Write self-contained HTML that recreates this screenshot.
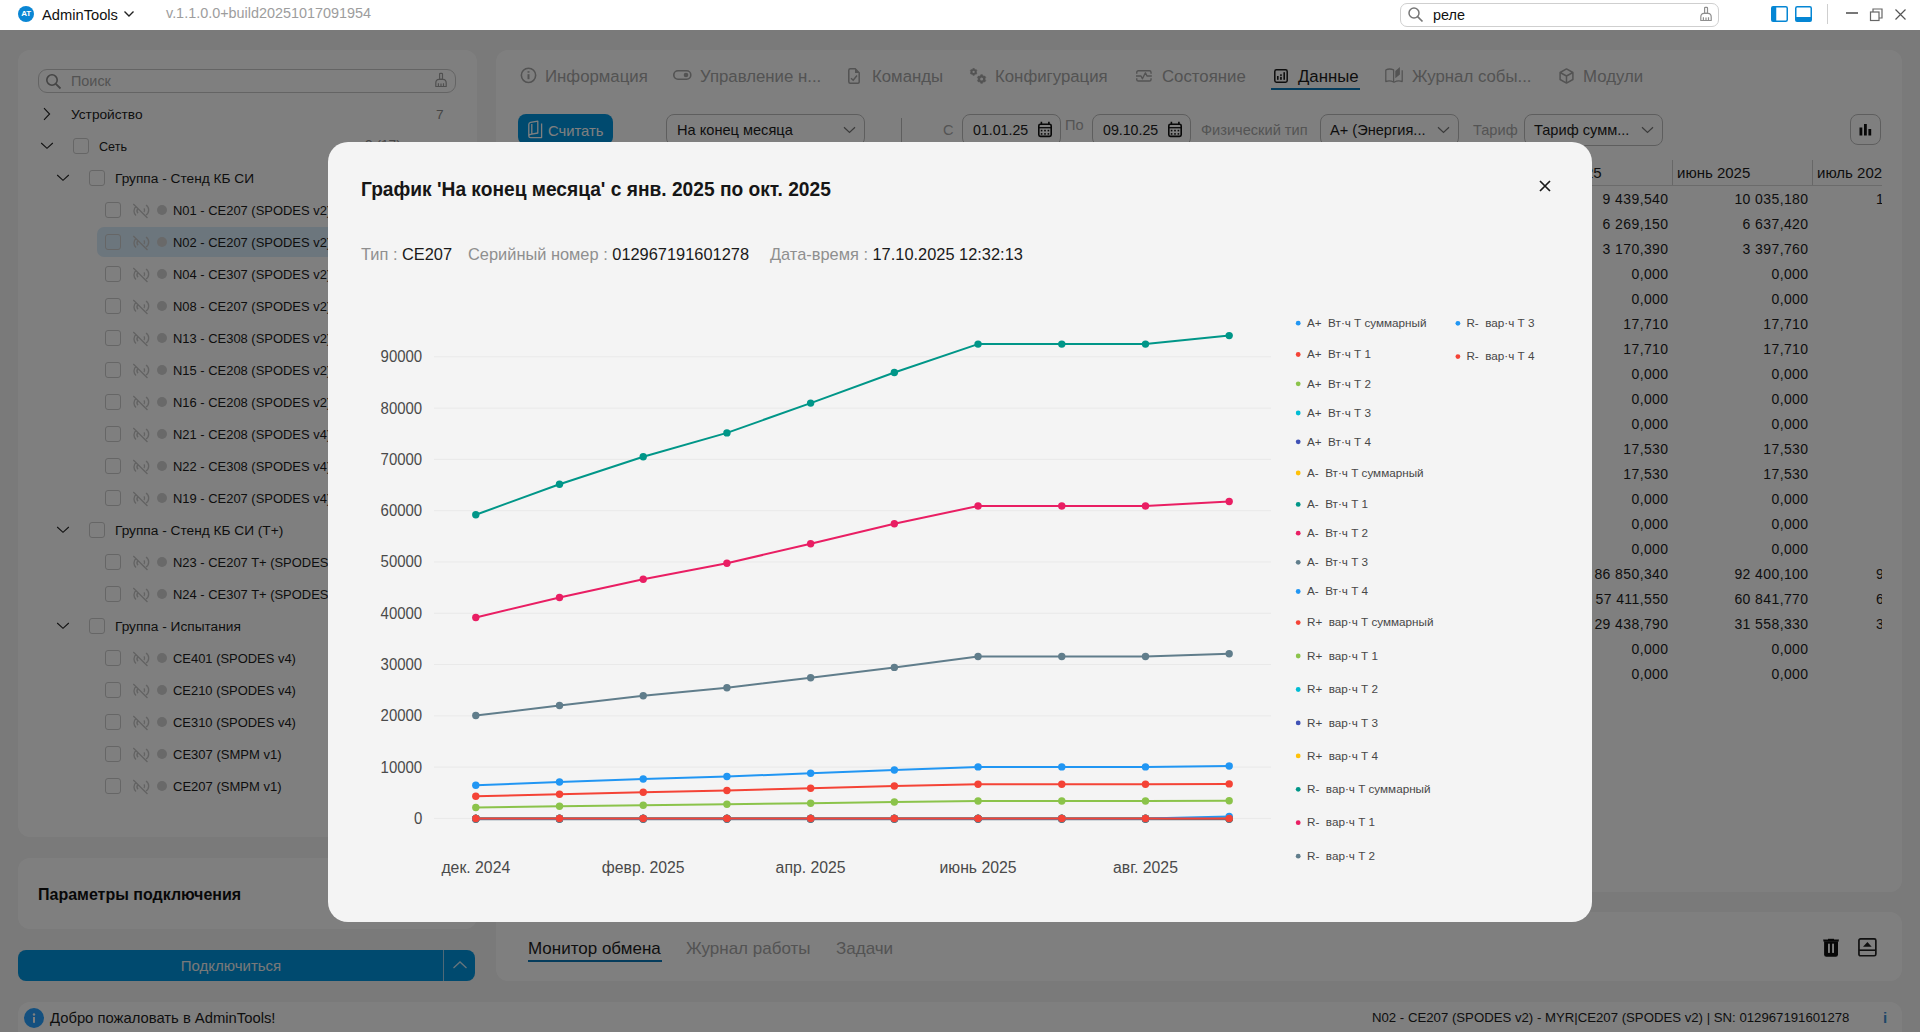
<!DOCTYPE html>
<html><head><meta charset="utf-8">
<style>
*{box-sizing:border-box;margin:0;padding:0}
html,body{width:1920px;height:1032px;overflow:hidden;background:#f4f4f4;font-family:"Liberation Sans",sans-serif;color:#1b1b1b}
.a{position:absolute;white-space:nowrap}
svg{position:absolute;overflow:visible}
#app{position:absolute;left:0;top:0;width:1920px;height:1032px}
.card{position:absolute;background:#fff;border-radius:12px}
#title{position:absolute;left:0;top:0;width:1920px;height:30px;background:#fff;z-index:5}
#ov{position:absolute;left:0;top:30px;width:1920px;height:1002px;background:rgba(0,0,0,.5);z-index:3}
#modal{position:absolute;left:328px;top:142px;width:1264px;height:779.5px;background:#f4f4f4;border-radius:20px;z-index:4;overflow:hidden}
.row{position:absolute;height:32px;line-height:32px;font-size:13.7px;color:#1c1c1c}
.cb{position:absolute;width:16px;height:16px;border:1.3px solid #cccccc;border-radius:3px}
.tab{position:absolute;top:61px;height:32px;line-height:32px;font-size:16.8px;color:#a4a4a4}
.dd{position:absolute;top:114px;height:32px;border:1px solid #bdbdbd;border-radius:8px;font-size:14.6px;line-height:29px;color:#1c1c1c}
.lbl{position:absolute;top:115px;height:31px;line-height:31px;font-size:14.6px;color:#a8a8a8}
.tr{position:absolute;height:25px;line-height:25px;font-size:14px;color:#1c1c1c;text-align:right;letter-spacing:0.4px}
</style></head><body>
<div id="app">
  <div class="card" style="left:18px;top:50px;width:459px;height:787px"></div>
  <div class="card" style="left:18px;top:858px;width:459px;height:71px"></div>
  <div class="a" style="left:18px;top:950px;width:457px;height:31px;background:#0094de;border-radius:8px"></div>
  <div class="card" style="left:18px;top:1002px;width:1884px;height:40px"></div>
  <div class="card" style="left:496px;top:50px;width:1406px;height:842px"></div>
  <div class="card" style="left:496px;top:912px;width:1406px;height:69px"></div>
<div class="a" style="left:38px;top:69px;width:418px;height:24px;border:1px solid #c8c8c8;border-radius:9px"></div>
<svg style="left:45px;top:73px" width="18" height="18" viewBox="0 0 18 18"><circle cx="7" cy="7" r="5.2" fill="none" stroke="#8a8a8a" stroke-width="1.6"/><path d="M10.8 10.8 L15.5 15.5" stroke="#8a8a8a" stroke-width="1.8"/></svg>
<div class="a" style="left:71px;top:69px;height:24px;line-height:24px;font-size:14.4px;color:#a6a6a6">Поиск</div>
<svg style="left:434.1px;top:72.1px" width="14" height="16" viewBox="0 0 14 16"><rect x="5.6" y="1.3" width="2.9" height="6" rx="0.8" fill="none" stroke="#a0a0a0" stroke-width="1.2"/><path d="M1.8 14.5 V11 Q1.8 7.6 5 7.4 H9 Q12.2 7.6 12.2 11 V14.5 Z M4.4 11.3 V14.5 M7 11.6 V14.5 M9.5 11.3 V14.5" fill="none" stroke="#a0a0a0" stroke-width="1.2" stroke-linejoin="round"/></svg>
<div class="a" style="left:97px;top:227px;width:380px;height:30px;border-radius:7px;background:#d9ecfa"></div>
<svg style="left:42px;top:107px" width="10" height="14" viewBox="0 0 10 14"><path d="M2 1.2 L7.6 7 L2 12.8" fill="none" stroke="#222" stroke-width="1.1"/></svg>
<div class="row" style="left:71px;top:99px">Устройство</div>
<div class="row" style="left:436px;top:99px;color:#8c8c8c">7</div>
<svg style="left:40px;top:141px" width="14" height="10" viewBox="0 0 14 10"><path d="M1.2 2 L7 7.3 L12.8 2" fill="none" stroke="#222" stroke-width="1.1"/></svg>
<div class="cb" style="left:73px;top:138px"></div>
<div class="row" style="left:99px;top:130.5px"><span style="display:inline-block;transform:scaleX(0.92);transform-origin:0 50%">Сеть</span></div>
<div class="row" style="left:365px;top:128.5px;color:#8c8c8c">9 (17)</div>
<svg style="left:56px;top:173px" width="14" height="10" viewBox="0 0 14 10"><path d="M1.2 2 L7 7.3 L12.8 2" fill="none" stroke="#222" stroke-width="1.1"/></svg>
<div class="cb" style="left:89px;top:170px"></div>
<div class="row" style="left:115px;top:162.5px"><span style="display:inline-block;transform:scaleX(1.0);transform-origin:0 50%">Группа - Стенд КБ СИ</span></div>
<div class="cb" style="left:105px;top:202px"></div>
<svg style="left:132px;top:202.5px" width="18" height="16" viewBox="0 0 18 16"><path d="M4 3.5 A6 6 0 0 0 4 12.5 M6 5.5 A3.5 3.5 0 0 0 6 10.2 M14 2 A6 6 0 0 1 14 12 M12 5.3 A3.2 3.2 0 0 1 12 9 M1.3 1 L15.5 15" fill="none" stroke="#c6c6c6" stroke-width="1.35"/></svg>
<div class="a" style="left:157px;top:205px;width:10px;height:10px;border-radius:5px;background:#d2d2d2"></div>
<div class="row" style="left:173px;top:194.5px"><span style="display:inline-block;transform:scaleX(0.945);transform-origin:0 50%">N01 - CE207 (SPODES v2)</span></div>
<div class="cb" style="left:105px;top:234px"></div>
<svg style="left:132px;top:234.5px" width="18" height="16" viewBox="0 0 18 16"><path d="M4 3.5 A6 6 0 0 0 4 12.5 M6 5.5 A3.5 3.5 0 0 0 6 10.2 M14 2 A6 6 0 0 1 14 12 M12 5.3 A3.2 3.2 0 0 1 12 9 M1.3 1 L15.5 15" fill="none" stroke="#c6c6c6" stroke-width="1.35"/></svg>
<div class="a" style="left:157px;top:237px;width:10px;height:10px;border-radius:5px;background:#d2d2d2"></div>
<div class="row" style="left:173px;top:226.5px"><span style="display:inline-block;transform:scaleX(0.945);transform-origin:0 50%">N02 - CE207 (SPODES v2)</span></div>
<div class="cb" style="left:105px;top:266px"></div>
<svg style="left:132px;top:266.5px" width="18" height="16" viewBox="0 0 18 16"><path d="M4 3.5 A6 6 0 0 0 4 12.5 M6 5.5 A3.5 3.5 0 0 0 6 10.2 M14 2 A6 6 0 0 1 14 12 M12 5.3 A3.2 3.2 0 0 1 12 9 M1.3 1 L15.5 15" fill="none" stroke="#c6c6c6" stroke-width="1.35"/></svg>
<div class="a" style="left:157px;top:269px;width:10px;height:10px;border-radius:5px;background:#d2d2d2"></div>
<div class="row" style="left:173px;top:258.5px"><span style="display:inline-block;transform:scaleX(0.945);transform-origin:0 50%">N04 - CE307 (SPODES v2)</span></div>
<div class="cb" style="left:105px;top:298px"></div>
<svg style="left:132px;top:298.5px" width="18" height="16" viewBox="0 0 18 16"><path d="M4 3.5 A6 6 0 0 0 4 12.5 M6 5.5 A3.5 3.5 0 0 0 6 10.2 M14 2 A6 6 0 0 1 14 12 M12 5.3 A3.2 3.2 0 0 1 12 9 M1.3 1 L15.5 15" fill="none" stroke="#c6c6c6" stroke-width="1.35"/></svg>
<div class="a" style="left:157px;top:301px;width:10px;height:10px;border-radius:5px;background:#d2d2d2"></div>
<div class="row" style="left:173px;top:290.5px"><span style="display:inline-block;transform:scaleX(0.945);transform-origin:0 50%">N08 - CE207 (SPODES v2)</span></div>
<div class="cb" style="left:105px;top:330px"></div>
<svg style="left:132px;top:330.5px" width="18" height="16" viewBox="0 0 18 16"><path d="M4 3.5 A6 6 0 0 0 4 12.5 M6 5.5 A3.5 3.5 0 0 0 6 10.2 M14 2 A6 6 0 0 1 14 12 M12 5.3 A3.2 3.2 0 0 1 12 9 M1.3 1 L15.5 15" fill="none" stroke="#c6c6c6" stroke-width="1.35"/></svg>
<div class="a" style="left:157px;top:333px;width:10px;height:10px;border-radius:5px;background:#d2d2d2"></div>
<div class="row" style="left:173px;top:322.5px"><span style="display:inline-block;transform:scaleX(0.945);transform-origin:0 50%">N13 - CE308 (SPODES v2)</span></div>
<div class="cb" style="left:105px;top:362px"></div>
<svg style="left:132px;top:362.5px" width="18" height="16" viewBox="0 0 18 16"><path d="M4 3.5 A6 6 0 0 0 4 12.5 M6 5.5 A3.5 3.5 0 0 0 6 10.2 M14 2 A6 6 0 0 1 14 12 M12 5.3 A3.2 3.2 0 0 1 12 9 M1.3 1 L15.5 15" fill="none" stroke="#c6c6c6" stroke-width="1.35"/></svg>
<div class="a" style="left:157px;top:365px;width:10px;height:10px;border-radius:5px;background:#d2d2d2"></div>
<div class="row" style="left:173px;top:354.5px"><span style="display:inline-block;transform:scaleX(0.945);transform-origin:0 50%">N15 - CE208 (SPODES v2)</span></div>
<div class="cb" style="left:105px;top:394px"></div>
<svg style="left:132px;top:394.5px" width="18" height="16" viewBox="0 0 18 16"><path d="M4 3.5 A6 6 0 0 0 4 12.5 M6 5.5 A3.5 3.5 0 0 0 6 10.2 M14 2 A6 6 0 0 1 14 12 M12 5.3 A3.2 3.2 0 0 1 12 9 M1.3 1 L15.5 15" fill="none" stroke="#c6c6c6" stroke-width="1.35"/></svg>
<div class="a" style="left:157px;top:397px;width:10px;height:10px;border-radius:5px;background:#d2d2d2"></div>
<div class="row" style="left:173px;top:386.5px"><span style="display:inline-block;transform:scaleX(0.945);transform-origin:0 50%">N16 - CE208 (SPODES v2)</span></div>
<div class="cb" style="left:105px;top:426px"></div>
<svg style="left:132px;top:426.5px" width="18" height="16" viewBox="0 0 18 16"><path d="M4 3.5 A6 6 0 0 0 4 12.5 M6 5.5 A3.5 3.5 0 0 0 6 10.2 M14 2 A6 6 0 0 1 14 12 M12 5.3 A3.2 3.2 0 0 1 12 9 M1.3 1 L15.5 15" fill="none" stroke="#c6c6c6" stroke-width="1.35"/></svg>
<div class="a" style="left:157px;top:429px;width:10px;height:10px;border-radius:5px;background:#d2d2d2"></div>
<div class="row" style="left:173px;top:418.5px"><span style="display:inline-block;transform:scaleX(0.945);transform-origin:0 50%">N21 - CE208 (SPODES v4)</span></div>
<div class="cb" style="left:105px;top:458px"></div>
<svg style="left:132px;top:458.5px" width="18" height="16" viewBox="0 0 18 16"><path d="M4 3.5 A6 6 0 0 0 4 12.5 M6 5.5 A3.5 3.5 0 0 0 6 10.2 M14 2 A6 6 0 0 1 14 12 M12 5.3 A3.2 3.2 0 0 1 12 9 M1.3 1 L15.5 15" fill="none" stroke="#c6c6c6" stroke-width="1.35"/></svg>
<div class="a" style="left:157px;top:461px;width:10px;height:10px;border-radius:5px;background:#d2d2d2"></div>
<div class="row" style="left:173px;top:450.5px"><span style="display:inline-block;transform:scaleX(0.945);transform-origin:0 50%">N22 - CE308 (SPODES v4)</span></div>
<div class="cb" style="left:105px;top:490px"></div>
<svg style="left:132px;top:490.5px" width="18" height="16" viewBox="0 0 18 16"><path d="M4 3.5 A6 6 0 0 0 4 12.5 M6 5.5 A3.5 3.5 0 0 0 6 10.2 M14 2 A6 6 0 0 1 14 12 M12 5.3 A3.2 3.2 0 0 1 12 9 M1.3 1 L15.5 15" fill="none" stroke="#c6c6c6" stroke-width="1.35"/></svg>
<div class="a" style="left:157px;top:493px;width:10px;height:10px;border-radius:5px;background:#d2d2d2"></div>
<div class="row" style="left:173px;top:482.5px"><span style="display:inline-block;transform:scaleX(0.945);transform-origin:0 50%">N19 - CE207 (SPODES v4)</span></div>
<svg style="left:56px;top:525px" width="14" height="10" viewBox="0 0 14 10"><path d="M1.2 2 L7 7.3 L12.8 2" fill="none" stroke="#222" stroke-width="1.1"/></svg>
<div class="cb" style="left:89px;top:522px"></div>
<div class="row" style="left:115px;top:514.5px"><span style="display:inline-block;transform:scaleX(1.0);transform-origin:0 50%">Группа - Стенд КБ СИ (T+)</span></div>
<div class="cb" style="left:105px;top:554px"></div>
<svg style="left:132px;top:554.5px" width="18" height="16" viewBox="0 0 18 16"><path d="M4 3.5 A6 6 0 0 0 4 12.5 M6 5.5 A3.5 3.5 0 0 0 6 10.2 M14 2 A6 6 0 0 1 14 12 M12 5.3 A3.2 3.2 0 0 1 12 9 M1.3 1 L15.5 15" fill="none" stroke="#c6c6c6" stroke-width="1.35"/></svg>
<div class="a" style="left:157px;top:557px;width:10px;height:10px;border-radius:5px;background:#d2d2d2"></div>
<div class="row" style="left:173px;top:546.5px"><span style="display:inline-block;transform:scaleX(0.945);transform-origin:0 50%">N23 - CE207 T+ (SPODES v2)</span></div>
<div class="cb" style="left:105px;top:586px"></div>
<svg style="left:132px;top:586.5px" width="18" height="16" viewBox="0 0 18 16"><path d="M4 3.5 A6 6 0 0 0 4 12.5 M6 5.5 A3.5 3.5 0 0 0 6 10.2 M14 2 A6 6 0 0 1 14 12 M12 5.3 A3.2 3.2 0 0 1 12 9 M1.3 1 L15.5 15" fill="none" stroke="#c6c6c6" stroke-width="1.35"/></svg>
<div class="a" style="left:157px;top:589px;width:10px;height:10px;border-radius:5px;background:#d2d2d2"></div>
<div class="row" style="left:173px;top:578.5px"><span style="display:inline-block;transform:scaleX(0.945);transform-origin:0 50%">N24 - CE307 T+ (SPODES v2)</span></div>
<svg style="left:56px;top:621px" width="14" height="10" viewBox="0 0 14 10"><path d="M1.2 2 L7 7.3 L12.8 2" fill="none" stroke="#222" stroke-width="1.1"/></svg>
<div class="cb" style="left:89px;top:618px"></div>
<div class="row" style="left:115px;top:610.5px"><span style="display:inline-block;transform:scaleX(1.0);transform-origin:0 50%">Группа - Испытания</span></div>
<div class="cb" style="left:105px;top:650px"></div>
<svg style="left:132px;top:650.5px" width="18" height="16" viewBox="0 0 18 16"><path d="M4 3.5 A6 6 0 0 0 4 12.5 M6 5.5 A3.5 3.5 0 0 0 6 10.2 M14 2 A6 6 0 0 1 14 12 M12 5.3 A3.2 3.2 0 0 1 12 9 M1.3 1 L15.5 15" fill="none" stroke="#c6c6c6" stroke-width="1.35"/></svg>
<div class="a" style="left:157px;top:653px;width:10px;height:10px;border-radius:5px;background:#d2d2d2"></div>
<div class="row" style="left:173px;top:642.5px"><span style="display:inline-block;transform:scaleX(0.945);transform-origin:0 50%">CE401 (SPODES v4)</span></div>
<div class="cb" style="left:105px;top:682px"></div>
<svg style="left:132px;top:682.5px" width="18" height="16" viewBox="0 0 18 16"><path d="M4 3.5 A6 6 0 0 0 4 12.5 M6 5.5 A3.5 3.5 0 0 0 6 10.2 M14 2 A6 6 0 0 1 14 12 M12 5.3 A3.2 3.2 0 0 1 12 9 M1.3 1 L15.5 15" fill="none" stroke="#c6c6c6" stroke-width="1.35"/></svg>
<div class="a" style="left:157px;top:685px;width:10px;height:10px;border-radius:5px;background:#d2d2d2"></div>
<div class="row" style="left:173px;top:674.5px"><span style="display:inline-block;transform:scaleX(0.945);transform-origin:0 50%">CE210 (SPODES v4)</span></div>
<div class="cb" style="left:105px;top:714px"></div>
<svg style="left:132px;top:714.5px" width="18" height="16" viewBox="0 0 18 16"><path d="M4 3.5 A6 6 0 0 0 4 12.5 M6 5.5 A3.5 3.5 0 0 0 6 10.2 M14 2 A6 6 0 0 1 14 12 M12 5.3 A3.2 3.2 0 0 1 12 9 M1.3 1 L15.5 15" fill="none" stroke="#c6c6c6" stroke-width="1.35"/></svg>
<div class="a" style="left:157px;top:717px;width:10px;height:10px;border-radius:5px;background:#d2d2d2"></div>
<div class="row" style="left:173px;top:706.5px"><span style="display:inline-block;transform:scaleX(0.945);transform-origin:0 50%">CE310 (SPODES v4)</span></div>
<div class="cb" style="left:105px;top:746px"></div>
<svg style="left:132px;top:746.5px" width="18" height="16" viewBox="0 0 18 16"><path d="M4 3.5 A6 6 0 0 0 4 12.5 M6 5.5 A3.5 3.5 0 0 0 6 10.2 M14 2 A6 6 0 0 1 14 12 M12 5.3 A3.2 3.2 0 0 1 12 9 M1.3 1 L15.5 15" fill="none" stroke="#c6c6c6" stroke-width="1.35"/></svg>
<div class="a" style="left:157px;top:749px;width:10px;height:10px;border-radius:5px;background:#d2d2d2"></div>
<div class="row" style="left:173px;top:738.5px"><span style="display:inline-block;transform:scaleX(0.952);transform-origin:0 50%">CE307 (SMPM v1)</span></div>
<div class="cb" style="left:105px;top:778px"></div>
<svg style="left:132px;top:778.5px" width="18" height="16" viewBox="0 0 18 16"><path d="M4 3.5 A6 6 0 0 0 4 12.5 M6 5.5 A3.5 3.5 0 0 0 6 10.2 M14 2 A6 6 0 0 1 14 12 M12 5.3 A3.2 3.2 0 0 1 12 9 M1.3 1 L15.5 15" fill="none" stroke="#c6c6c6" stroke-width="1.35"/></svg>
<div class="a" style="left:157px;top:781px;width:10px;height:10px;border-radius:5px;background:#d2d2d2"></div>
<div class="row" style="left:173px;top:770.5px"><span style="display:inline-block;transform:scaleX(0.952);transform-origin:0 50%">CE207 (SMPM v1)</span></div>
<div class="a" style="left:38px;top:879px;height:32px;line-height:32px;font-size:16px;font-weight:700;color:#111">Параметры подключения</div>
<div class="a" style="left:18px;top:950px;width:457px;height:31px;line-height:31px;text-align:center;font-size:15px;color:#f2f2f2;padding-right:31px">Подключиться</div>
<div class="a" style="left:443px;top:950px;width:1px;height:31px;background:#9fd3ef"></div>
<svg style="left:452px;top:960px" width="16" height="10" viewBox="0 0 16 10"><path d="M1.5 8 L8 2 L14.5 8" fill="none" stroke="#cfe9f7" stroke-width="1.3"/></svg>
<svg style="left:24px;top:1008px" width="20" height="20" viewBox="0 0 20 20"><circle cx="10" cy="10" r="10" fill="#28a0ff"/><rect x="9" y="9" width="2" height="5.8" fill="#fff"/><circle cx="10" cy="6.5" r="1.2" fill="#fff"/></svg>
<div class="a" style="left:50px;top:1004px;height:28px;line-height:28px;font-size:14.8px;color:#1c1c1c">Добро пожаловать в AdminTools!</div>
<div class="a" style="left:1372px;top:1004px;height:28px;line-height:28px;font-size:13.2px;color:#1c1c1c">N02 - CE207 (SPODES v2) - MYR|CE207 (SPODES v2) | SN: 012967191601278</div>
<div class="a" style="left:1883px;top:1004px;height:28px;line-height:28px;font-size:15px;font-weight:700;color:#3c8fd0">i</div>
<svg style="left:519.5px;top:67.4px" width="17" height="17" viewBox="0 0 17 17"><circle cx="8.5" cy="8.35" r="7.15" fill="none" stroke="#a6a6a6" stroke-width="1.6"/><rect x="7.5" y="7.2" width="2" height="5" fill="#a6a6a6"/><rect x="7.5" y="4.2" width="2" height="1.5" fill="#a6a6a6"/></svg>
<div class="tab" style="left:545px;color:#a6a6a6">Информация</div>
<svg style="left:673px;top:70.2px" width="19" height="11" viewBox="0 0 19 11"><rect x="0.8" y="0.8" width="17" height="8.4" rx="4.2" fill="none" stroke="#a6a6a6" stroke-width="1.6"/><circle cx="13" cy="5" r="2.3" fill="#a6a6a6"/></svg>
<div class="tab" style="left:700px;color:#a6a6a6">Управление н...</div>
<svg style="left:848px;top:68px" width="12" height="16" viewBox="0 0 12 16"><path d="M0.8 2.3 Q0.8 0.8 2.3 0.8 H7.2 L11.2 4.8 V14 Q11.2 15.2 10 15.2 H2.3 Q0.8 15.2 0.8 13.7 Z" fill="none" stroke="#a6a6a6" stroke-width="1.5"/><path d="M7 0.8 V5 H11.2 Z" fill="#a6a6a6"/><path d="M3 10.2 L5.2 12.2 L9 7.5" fill="none" stroke="#a6a6a6" stroke-width="1.5"/></svg>
<div class="tab" style="left:872px;color:#a6a6a6">Команды</div>
<svg style="left:970px;top:66px" width="20" height="20" viewBox="0 0 20 20"><path d="M2.93 2.46 L4.27 2.46 L4.65 3.30 L5.32 3.69 L6.24 3.60 L6.91 4.76 L6.37 5.51 L6.37 6.29 L6.91 7.04 L6.24 8.20 L5.32 8.11 L4.65 8.50 L4.27 9.34 L2.93 9.34 L2.55 8.50 L1.88 8.11 L0.96 8.20 L0.29 7.04 L0.83 6.29 L0.83 5.51 L0.29 4.76 L0.96 3.60 L1.88 3.69 L2.55 3.30Z" fill="#a6a6a6" stroke="#a6a6a6" stroke-width="0.6" stroke-linejoin="round"/><circle cx="3.6" cy="5.9" r="1.15" fill="#fff"/><path d="M10.76 8.68 L12.44 8.68 L12.92 9.74 L13.77 10.23 L14.92 10.11 L15.76 11.57 L15.09 12.51 L15.09 13.49 L15.76 14.43 L14.92 15.89 L13.77 15.77 L12.92 16.26 L12.44 17.32 L10.76 17.32 L10.28 16.26 L9.43 15.77 L8.28 15.89 L7.44 14.43 L8.11 13.49 L8.11 12.51 L7.44 11.57 L8.28 10.11 L9.43 10.23 L10.28 9.74Z" fill="#a6a6a6" stroke="#a6a6a6" stroke-width="0.6" stroke-linejoin="round"/><circle cx="11.6" cy="13" r="1.5" fill="#fff"/></svg>
<div class="tab" style="left:995px;color:#a6a6a6">Конфигурация</div>
<svg style="left:1136px;top:70px" width="17" height="13" viewBox="0 0 17 13"><path d="M0.75 3.8 V2.4 Q0.75 0.75 2.4 0.75 H13.4 Q15.05 0.75 15.05 2.4 V3.8 M0.75 8.2 V9.4 Q0.75 11.0 2.4 11.0 H13.4 Q15.05 11.0 15.05 9.4 V8.2" fill="none" stroke="#a6a6a6" stroke-width="1.4"/><path d="M0 6 H5 L6.4 8.8 L9.4 2.8 L11 6 H15.8" fill="none" stroke="#a6a6a6" stroke-width="1.4" stroke-linejoin="round"/></svg>
<div class="tab" style="left:1162px;color:#a6a6a6">Состояние</div>
<svg style="left:1274px;top:69px" width="14" height="14" viewBox="0 0 14 14"><rect x="0.8" y="0.8" width="12.4" height="12.4" rx="1.6" fill="none" stroke="#1c1c1c" stroke-width="1.5"/><rect x="3" y="7" width="1.6" height="3.8" fill="#1c1c1c"/><rect x="6.1" y="5.3" width="1.7" height="1.6" fill="#1c1c1c"/><rect x="6.1" y="7.8" width="1.7" height="3" fill="#1c1c1c"/><rect x="9.4" y="3.2" width="1.6" height="7.6" fill="#1c1c1c"/></svg>
<div class="tab" style="left:1298px;color:#1c1c1c">Данные</div>
<svg style="left:1385px;top:66px" width="19" height="18" viewBox="0 0 19 18"><path d="M0.8 3.8 Q4.6 2.2 8.6 3.8 V16 M0.8 3.8 V15.6 Q4.6 14 9 16.2 Q13.2 14 17.2 15.6 V4.2" fill="none" stroke="#a6a6a6" stroke-width="1.25" stroke-linejoin="round"/><path d="M10.3 4.95 L14.9 0.9 V8.5 L10.3 12.3 Z" fill="#a6a6a6"/></svg>
<div class="tab" style="left:1412px;color:#a6a6a6">Журнал собы...</div>
<svg style="left:1558.5px;top:67.8px" width="15" height="16" viewBox="0 0 15 16"><path d="M7.5 0.9 L13.9 4.5 V11.5 L7.5 15.1 L1.1 11.5 V4.5 Z M1.1 4.5 L7.5 8 L13.9 4.5 M7.5 8 V15.1" fill="none" stroke="#a6a6a6" stroke-width="1.5" stroke-linejoin="round"/></svg>
<div class="tab" style="left:1583px;color:#a6a6a6">Модули</div>
<div class="a" style="left:1271px;top:88px;width:89px;height:2px;background:#0a78b8"></div>
<div class="a" style="left:518px;top:114px;width:95px;height:31px;border-radius:8px;background:#0094de"></div>
<svg style="left:528px;top:120px" width="15" height="19" viewBox="0 0 15 19"><path d="M3.8 4 V14.2 L9.8 13 V1.2 L2.6 2.3 Q0.8 2.7 0.8 4.6 V16 Q0.8 17.6 2.6 17.6 H13.6 V3.6 M0.8 15.8 Q0.8 14.6 3.8 14.2" fill="none" stroke="#fff" stroke-width="1.3" stroke-linejoin="round"/></svg>
<div class="a" style="left:548px;top:115.5px;height:31px;line-height:31px;font-size:14.8px;color:#fff">Считать</div>
<div class="dd" style="left:666px;width:199px"></div><div class="a" style="left:677px;top:115px;height:31px;line-height:31px;font-size:14.6px;color:#1c1c1c">На конец месяца</div><svg style="left:843px;top:126px" width="13" height="8" viewBox="0 0 13 8"><path d="M1 1.2 L6.5 6.5 L12 1.2" fill="none" stroke="#777" stroke-width="1.2"/></svg>
<div class="a" style="left:901px;top:118px;width:1px;height:27px;background:#bdbdbd"></div>
<div class="lbl" style="left:943px;top:115px">С</div>
<div class="dd" style="left:962px;width:99px"></div><div class="a" style="left:973px;top:115px;height:31px;line-height:31px;font-size:14.2px;color:#1c1c1c">01.01.25</div><svg style="left:1038px;top:120.6px" width="14" height="17" viewBox="0 0 14 17"><rect x="0.8" y="3.2" width="12.4" height="12.2" rx="1.6" fill="none" stroke="#111" stroke-width="1.6"/><path d="M3.4 0.7 V3.4 M10.9 0.7 V3.4" stroke="#111" stroke-width="1.6"/><path d="M0.8 6.7 H13.2" stroke="#111" stroke-width="1.3"/><rect x="2.8" y="8.8" width="1.6" height="1.6" fill="#111"/><rect x="6.2" y="8.8" width="1.6" height="1.6" fill="#111"/><rect x="9.6" y="8.8" width="1.6" height="1.6" fill="#111"/><rect x="2.8" y="12.1" width="1.6" height="1.6" fill="#111"/><rect x="6.2" y="12.1" width="1.6" height="1.6" fill="#111"/><rect x="9.6" y="12.1" width="1.6" height="1.6" fill="#111"/></svg>
<div class="lbl" style="left:1065px;top:110px">По</div>
<div class="dd" style="left:1092px;width:99px"></div><div class="a" style="left:1103px;top:115px;height:31px;line-height:31px;font-size:14.2px;color:#1c1c1c">09.10.25</div><svg style="left:1168px;top:120.6px" width="14" height="17" viewBox="0 0 14 17"><rect x="0.8" y="3.2" width="12.4" height="12.2" rx="1.6" fill="none" stroke="#111" stroke-width="1.6"/><path d="M3.4 0.7 V3.4 M10.9 0.7 V3.4" stroke="#111" stroke-width="1.6"/><path d="M0.8 6.7 H13.2" stroke="#111" stroke-width="1.3"/><rect x="2.8" y="8.8" width="1.6" height="1.6" fill="#111"/><rect x="6.2" y="8.8" width="1.6" height="1.6" fill="#111"/><rect x="9.6" y="8.8" width="1.6" height="1.6" fill="#111"/><rect x="2.8" y="12.1" width="1.6" height="1.6" fill="#111"/><rect x="6.2" y="12.1" width="1.6" height="1.6" fill="#111"/><rect x="9.6" y="12.1" width="1.6" height="1.6" fill="#111"/></svg>
<div class="lbl" style="left:1201px">Физический тип</div>
<div class="dd" style="left:1320px;width:139px"></div><div class="a" style="left:1330px;top:115px;height:31px;line-height:31px;font-size:14.6px;color:#1c1c1c">A+ (Энергия...</div><svg style="left:1437px;top:126px" width="13" height="8" viewBox="0 0 13 8"><path d="M1 1.2 L6.5 6.5 L12 1.2" fill="none" stroke="#777" stroke-width="1.2"/></svg>
<div class="lbl" style="left:1473px">Тариф</div>
<div class="dd" style="left:1524px;width:139px"></div><div class="a" style="left:1534px;top:115px;height:31px;line-height:31px;font-size:14.6px;color:#1c1c1c">Тариф сумм...</div><svg style="left:1641px;top:126px" width="13" height="8" viewBox="0 0 13 8"><path d="M1 1.2 L6.5 6.5 L12 1.2" fill="none" stroke="#777" stroke-width="1.2"/></svg>
<div class="a" style="left:1850px;top:114px;width:31px;height:31px;border:1px solid #bdbdbd;border-radius:8px"></div>
<svg style="left:1859px;top:123px" width="13" height="13" viewBox="0 0 13 13"><rect x="0.5" y="4.5" width="2.8" height="8" fill="#111"/><rect x="5" y="1" width="2.8" height="11.5" fill="#111"/><rect x="9.4" y="6" width="2.8" height="6.5" fill="#111"/></svg>
<div class="a" style="left:1672px;top:160px;width:1px;height:25px;background:#cfcfcf"></div>
<div class="a" style="left:1812px;top:160px;width:1px;height:25px;background:#cfcfcf"></div>
<div class="a" style="left:1500px;top:185px;width:382px;height:1px;background:#d6d6d6"></div>
<div class="a" style="left:1537px;top:160px;height:25px;line-height:25px;font-size:15px;color:#1c1c1c">май 2025</div>
<div class="a" style="left:1677px;top:160px;height:25px;line-height:25px;font-size:15px;color:#1c1c1c">июнь 2025</div>
<div class="a" style="left:1500px;top:150px;width:382px;height:560px;overflow:hidden"><div class="a" style="left:317px;top:10px;height:25px;line-height:25px;font-size:15px;color:#1c1c1c">июль 2025</div>
<div class="tr" style="left:0;width:168.5px;top:37px">9 439,540</div>
<div class="tr" style="left:200px;width:108.5px;top:37px">10 035,180</div>
<div class="tr" style="left:300px;width:150px;top:37px;text-align:left;padding-left:76px">10 335,180</div>
<div class="tr" style="left:0;width:168.5px;top:62px">6 269,150</div>
<div class="tr" style="left:200px;width:108.5px;top:62px">6 637,420</div>
<div class="tr" style="left:0;width:168.5px;top:87px">3 170,390</div>
<div class="tr" style="left:200px;width:108.5px;top:87px">3 397,760</div>
<div class="tr" style="left:0;width:168.5px;top:112px">0,000</div>
<div class="tr" style="left:200px;width:108.5px;top:112px">0,000</div>
<div class="tr" style="left:0;width:168.5px;top:137px">0,000</div>
<div class="tr" style="left:200px;width:108.5px;top:137px">0,000</div>
<div class="tr" style="left:0;width:168.5px;top:162px">17,710</div>
<div class="tr" style="left:200px;width:108.5px;top:162px">17,710</div>
<div class="tr" style="left:0;width:168.5px;top:187px">17,710</div>
<div class="tr" style="left:200px;width:108.5px;top:187px">17,710</div>
<div class="tr" style="left:0;width:168.5px;top:212px">0,000</div>
<div class="tr" style="left:200px;width:108.5px;top:212px">0,000</div>
<div class="tr" style="left:0;width:168.5px;top:237px">0,000</div>
<div class="tr" style="left:200px;width:108.5px;top:237px">0,000</div>
<div class="tr" style="left:0;width:168.5px;top:262px">0,000</div>
<div class="tr" style="left:200px;width:108.5px;top:262px">0,000</div>
<div class="tr" style="left:0;width:168.5px;top:287px">17,530</div>
<div class="tr" style="left:200px;width:108.5px;top:287px">17,530</div>
<div class="tr" style="left:0;width:168.5px;top:312px">17,530</div>
<div class="tr" style="left:200px;width:108.5px;top:312px">17,530</div>
<div class="tr" style="left:0;width:168.5px;top:337px">0,000</div>
<div class="tr" style="left:200px;width:108.5px;top:337px">0,000</div>
<div class="tr" style="left:0;width:168.5px;top:362px">0,000</div>
<div class="tr" style="left:200px;width:108.5px;top:362px">0,000</div>
<div class="tr" style="left:0;width:168.5px;top:387px">0,000</div>
<div class="tr" style="left:200px;width:108.5px;top:387px">0,000</div>
<div class="tr" style="left:0;width:168.5px;top:412px">86 850,340</div>
<div class="tr" style="left:200px;width:108.5px;top:412px">92 400,100</div>
<div class="tr" style="left:300px;width:150px;top:412px;text-align:left;padding-left:76px">92 400,100</div>
<div class="tr" style="left:0;width:168.5px;top:437px">57 411,550</div>
<div class="tr" style="left:200px;width:108.5px;top:437px">60 841,770</div>
<div class="tr" style="left:300px;width:150px;top:437px;text-align:left;padding-left:76px">60 841,770</div>
<div class="tr" style="left:0;width:168.5px;top:462px">29 438,790</div>
<div class="tr" style="left:200px;width:108.5px;top:462px">31 558,330</div>
<div class="tr" style="left:300px;width:150px;top:462px;text-align:left;padding-left:76px">31 558,330</div>
<div class="tr" style="left:0;width:168.5px;top:487px">0,000</div>
<div class="tr" style="left:200px;width:108.5px;top:487px">0,000</div>
<div class="tr" style="left:0;width:168.5px;top:512px">0,000</div>
<div class="tr" style="left:200px;width:108.5px;top:512px">0,000</div>
</div>
<div class="a" style="left:528px;top:934px;height:30px;line-height:30px;font-size:17px;color:#1c1c1c">Монитор обмена</div>
<div class="a" style="left:528px;top:960px;width:134px;height:2px;background:#0a78b8"></div>
<div class="a" style="left:686px;top:934px;height:30px;line-height:30px;font-size:17px;color:#a6a6a6">Журнал работы</div>
<div class="a" style="left:836px;top:934px;height:30px;line-height:30px;font-size:17px;color:#a6a6a6">Задачи</div>
<svg style="left:1823px;top:938px" width="16" height="19" viewBox="0 0 16 19"><path d="M0.1 1.6 H16 L15.5 3.7 H0.6 Z" fill="#111"/><rect x="5" y="0.8" width="6" height="1.5" fill="#111"/><path d="M1.1 3.6 H15 V16.5 Q15 18.8 12.8 18.8 H3.3 Q1.1 18.8 1.1 16.5 Z" fill="#111"/><rect x="5" y="5.7" width="1.9" height="9.2" fill="#fff"/><rect x="9.1" y="5.7" width="1.9" height="9.2" fill="#fff"/></svg>
<svg style="left:1858px;top:938px" width="19" height="19" viewBox="0 0 19 19"><rect x="0.95" y="0.95" width="16.9" height="16.8" rx="1.6" fill="none" stroke="#222" stroke-width="1.7"/><path d="M1 12.2 H18" stroke="#222" stroke-width="1.6"/><path d="M9.4 4 L5 8.8 H13.7 Z" fill="#222"/></svg>
</div>
<div id="ov"></div>
<div id="title">
<div class="a" style="left:18px;top:6px;width:16px;height:16px;border-radius:8px;background:#0a86d4;color:#fff;font-size:8px;font-weight:700;line-height:16px;text-align:center;letter-spacing:-0.3px">AT</div>
<div class="a" style="left:42px;top:0;height:30px;line-height:30px;font-size:14.7px;color:#111">AdminTools</div>
<svg style="left:123px;top:10px" width="12" height="8" viewBox="0 0 12 8"><path d="M1.5 1.5 L6 6 L10.5 1.5" fill="none" stroke="#222" stroke-width="1.4"/></svg>
<div class="a" style="left:166px;top:-1px;height:28px;line-height:28px;font-size:14.4px;color:#9d9d9d">v.1.1.0.0+build20251017091954</div>
<div class="a" style="left:1400px;top:3px;width:319px;height:24px;border:1px solid #cfcfcf;border-radius:7px;background:#fff"></div>
<svg style="left:1407px;top:6px" width="18" height="18" viewBox="0 0 18 18"><circle cx="7" cy="7" r="5" fill="none" stroke="#777" stroke-width="1.5"/><path d="M10.6 10.6 L15.5 15.5" stroke="#777" stroke-width="1.7"/></svg>
<div class="a" style="left:1433px;top:2px;height:26px;line-height:26px;font-size:14.4px;color:#111">реле</div>
<svg style="left:1699px;top:6px" width="14" height="16" viewBox="0 0 14 16"><rect x="5.6" y="1.3" width="2.9" height="6" rx="0.8" fill="none" stroke="#8f8f8f" stroke-width="1.2"/><path d="M1.8 14.5 V11 Q1.8 7.6 5 7.4 H9 Q12.2 7.6 12.2 11 V14.5 Z M4.4 11.3 V14.5 M7 11.6 V14.5 M9.5 11.3 V14.5" fill="none" stroke="#8f8f8f" stroke-width="1.2" stroke-linejoin="round"/></svg>
<svg style="left:1771px;top:6px" width="17" height="16" viewBox="0 0 17 16"><rect x="0.75" y="0.75" width="15.5" height="14.5" rx="1.5" fill="#fff" stroke="#0586d4" stroke-width="1.5"/><rect x="0.75" y="0.75" width="4.5" height="14.5" fill="#0586d4"/></svg>
<svg style="left:1795px;top:6px" width="17" height="16" viewBox="0 0 17 16"><rect x="0.75" y="0.75" width="15.5" height="14.5" rx="1.5" fill="#fff" stroke="#0586d4" stroke-width="1.5"/><rect x="0.75" y="11" width="15.5" height="4.25" fill="#0586d4"/></svg>
<div class="a" style="left:1827px;top:4px;width:1px;height:20px;background:#cfcfcf"></div>
<div class="a" style="left:1846px;top:12px;width:12px;height:1.6px;background:#777"></div>
<svg style="left:1869px;top:7px" width="15" height="15" viewBox="0 0 15 15"><rect x="1.5" y="5" width="8.5" height="8.5" fill="none" stroke="#666" stroke-width="1.2"/><path d="M4 5 V2 H13 V11 H10" fill="none" stroke="#666" stroke-width="1.2"/></svg>
<svg style="left:1894px;top:8px" width="13" height="13" viewBox="0 0 13 13"><path d="M1.5 1.5 L11.5 11.5 M11.5 1.5 L1.5 11.5" stroke="#555" stroke-width="1.2"/></svg>
</div>
<div id="modal"><div class="a" style="left:33px;top:31.400000000000006px;height:32px;line-height:32px;font-size:20.4px;font-weight:700;color:#161616;transform:scaleX(0.94);transform-origin:0 50%">График 'На конец месяца' с янв. 2025 по окт. 2025</div>
<svg style="left:1211px;top:38px" width="12" height="12" viewBox="0 0 12 12"><path d="M1 1 L11 11 M11 1 L1 11" stroke="#1a1a1a" stroke-width="1.7"/></svg>
<div class="a" style="left:33px;top:98px;height:28px;line-height:28px;font-size:16.4px;color:#8f8f8f">Тип : <span style="color:#1a1a1a">CE207</span></div>
<div class="a" style="left:140px;top:98px;height:28px;line-height:28px;font-size:16.4px;color:#8f8f8f">Серийный номер : <span style="color:#1a1a1a">012967191601278</span></div>
<div class="a" style="left:442px;top:98px;height:28px;line-height:28px;font-size:16.4px;color:#8f8f8f">Дата-время : <span style="color:#1a1a1a">17.10.2025 12:32:13</span></div>
<svg style="left:-328px;top:-142px" width="1920" height="1032" viewBox="0 0 1920 1032"><rect x="434" y="817.90" width="837" height="1" fill="#e9e9e9"/><rect x="434" y="766.61" width="837" height="1" fill="#e9e9e9"/><rect x="434" y="715.32" width="837" height="1" fill="#e9e9e9"/><rect x="434" y="664.03" width="837" height="1" fill="#e9e9e9"/><rect x="434" y="612.74" width="837" height="1" fill="#e9e9e9"/><rect x="434" y="561.45" width="837" height="1" fill="#e9e9e9"/><rect x="434" y="510.16" width="837" height="1" fill="#e9e9e9"/><rect x="434" y="458.87" width="837" height="1" fill="#e9e9e9"/><rect x="434" y="407.58" width="837" height="1" fill="#e9e9e9"/><rect x="434" y="356.29" width="837" height="1" fill="#e9e9e9"/><text x="422.2" y="823.90" text-anchor="end" font-family="Liberation Sans" font-size="16" fill="#4a4a4a" textLength="8.32" lengthAdjust="spacingAndGlyphs">0</text><text x="422.2" y="772.61" text-anchor="end" font-family="Liberation Sans" font-size="16" fill="#4a4a4a" textLength="41.61" lengthAdjust="spacingAndGlyphs">10000</text><text x="422.2" y="721.32" text-anchor="end" font-family="Liberation Sans" font-size="16" fill="#4a4a4a" textLength="41.61" lengthAdjust="spacingAndGlyphs">20000</text><text x="422.2" y="670.03" text-anchor="end" font-family="Liberation Sans" font-size="16" fill="#4a4a4a" textLength="41.61" lengthAdjust="spacingAndGlyphs">30000</text><text x="422.2" y="618.74" text-anchor="end" font-family="Liberation Sans" font-size="16" fill="#4a4a4a" textLength="41.61" lengthAdjust="spacingAndGlyphs">40000</text><text x="422.2" y="567.45" text-anchor="end" font-family="Liberation Sans" font-size="16" fill="#4a4a4a" textLength="41.61" lengthAdjust="spacingAndGlyphs">50000</text><text x="422.2" y="516.16" text-anchor="end" font-family="Liberation Sans" font-size="16" fill="#4a4a4a" textLength="41.61" lengthAdjust="spacingAndGlyphs">60000</text><text x="422.2" y="464.87" text-anchor="end" font-family="Liberation Sans" font-size="16" fill="#4a4a4a" textLength="41.61" lengthAdjust="spacingAndGlyphs">70000</text><text x="422.2" y="413.58" text-anchor="end" font-family="Liberation Sans" font-size="16" fill="#4a4a4a" textLength="41.61" lengthAdjust="spacingAndGlyphs">80000</text><text x="422.2" y="362.29" text-anchor="end" font-family="Liberation Sans" font-size="16" fill="#4a4a4a" textLength="41.61" lengthAdjust="spacingAndGlyphs">90000</text><text x="475.80" y="872.8" text-anchor="middle" font-family="Liberation Sans" font-size="15.8" fill="#4a4a4a">дек. 2024</text><text x="643.22" y="872.8" text-anchor="middle" font-family="Liberation Sans" font-size="15.8" fill="#4a4a4a">февр. 2025</text><text x="810.64" y="872.8" text-anchor="middle" font-family="Liberation Sans" font-size="15.8" fill="#4a4a4a">апр. 2025</text><text x="978.06" y="872.8" text-anchor="middle" font-family="Liberation Sans" font-size="15.8" fill="#4a4a4a">июнь 2025</text><text x="1145.48" y="872.8" text-anchor="middle" font-family="Liberation Sans" font-size="15.8" fill="#4a4a4a">авг. 2025</text><polyline points="475.80,785.25 559.51,782.00 643.22,779.00 726.93,776.50 810.64,773.25 894.35,770.00 978.06,766.90 1061.77,766.90 1145.48,766.90 1229.19,766.00" fill="none" stroke="#2196f3" stroke-width="2" stroke-linejoin="round"/><circle cx="475.80" cy="785.25" r="3.7" fill="#2196f3"/><circle cx="559.51" cy="782.00" r="3.7" fill="#2196f3"/><circle cx="643.22" cy="779.00" r="3.7" fill="#2196f3"/><circle cx="726.93" cy="776.50" r="3.7" fill="#2196f3"/><circle cx="810.64" cy="773.25" r="3.7" fill="#2196f3"/><circle cx="894.35" cy="770.00" r="3.7" fill="#2196f3"/><circle cx="978.06" cy="766.90" r="3.7" fill="#2196f3"/><circle cx="1061.77" cy="766.90" r="3.7" fill="#2196f3"/><circle cx="1145.48" cy="766.90" r="3.7" fill="#2196f3"/><circle cx="1229.19" cy="766.00" r="3.7" fill="#2196f3"/><polyline points="475.80,796.25 559.51,794.25 643.22,792.25 726.93,790.50 810.64,788.25 894.35,786.00 978.06,784.20 1061.77,784.20 1145.48,784.20 1229.19,783.90" fill="none" stroke="#f44336" stroke-width="2" stroke-linejoin="round"/><circle cx="475.80" cy="796.25" r="3.7" fill="#f44336"/><circle cx="559.51" cy="794.25" r="3.7" fill="#f44336"/><circle cx="643.22" cy="792.25" r="3.7" fill="#f44336"/><circle cx="726.93" cy="790.50" r="3.7" fill="#f44336"/><circle cx="810.64" cy="788.25" r="3.7" fill="#f44336"/><circle cx="894.35" cy="786.00" r="3.7" fill="#f44336"/><circle cx="978.06" cy="784.20" r="3.7" fill="#f44336"/><circle cx="1061.77" cy="784.20" r="3.7" fill="#f44336"/><circle cx="1145.48" cy="784.20" r="3.7" fill="#f44336"/><circle cx="1229.19" cy="783.90" r="3.7" fill="#f44336"/><polyline points="475.80,807.50 559.51,806.25 643.22,805.25 726.93,804.25 810.64,803.25 894.35,802.00 978.06,801.00 1061.77,801.00 1145.48,801.00 1229.19,800.80" fill="none" stroke="#8bc34a" stroke-width="2" stroke-linejoin="round"/><circle cx="475.80" cy="807.50" r="3.7" fill="#8bc34a"/><circle cx="559.51" cy="806.25" r="3.7" fill="#8bc34a"/><circle cx="643.22" cy="805.25" r="3.7" fill="#8bc34a"/><circle cx="726.93" cy="804.25" r="3.7" fill="#8bc34a"/><circle cx="810.64" cy="803.25" r="3.7" fill="#8bc34a"/><circle cx="894.35" cy="802.00" r="3.7" fill="#8bc34a"/><circle cx="978.06" cy="801.00" r="3.7" fill="#8bc34a"/><circle cx="1061.77" cy="801.00" r="3.7" fill="#8bc34a"/><circle cx="1145.48" cy="801.00" r="3.7" fill="#8bc34a"/><circle cx="1229.19" cy="800.80" r="3.7" fill="#8bc34a"/><polyline points="475.80,818.40 559.51,818.40 643.22,818.40 726.93,818.40 810.64,818.40 894.35,818.40 978.06,818.40 1061.77,818.40 1145.48,818.40 1229.19,818.40" fill="none" stroke="#00bcd4" stroke-width="2" stroke-linejoin="round"/><circle cx="475.80" cy="818.40" r="3.7" fill="#00bcd4"/><circle cx="559.51" cy="818.40" r="3.7" fill="#00bcd4"/><circle cx="643.22" cy="818.40" r="3.7" fill="#00bcd4"/><circle cx="726.93" cy="818.40" r="3.7" fill="#00bcd4"/><circle cx="810.64" cy="818.40" r="3.7" fill="#00bcd4"/><circle cx="894.35" cy="818.40" r="3.7" fill="#00bcd4"/><circle cx="978.06" cy="818.40" r="3.7" fill="#00bcd4"/><circle cx="1061.77" cy="818.40" r="3.7" fill="#00bcd4"/><circle cx="1145.48" cy="818.40" r="3.7" fill="#00bcd4"/><circle cx="1229.19" cy="818.40" r="3.7" fill="#00bcd4"/><polyline points="475.80,818.40 559.51,818.40 643.22,818.40 726.93,818.40 810.64,818.40 894.35,818.40 978.06,818.40 1061.77,818.40 1145.48,818.40 1229.19,818.40" fill="none" stroke="#3f51b5" stroke-width="2" stroke-linejoin="round"/><circle cx="475.80" cy="818.40" r="3.7" fill="#3f51b5"/><circle cx="559.51" cy="818.40" r="3.7" fill="#3f51b5"/><circle cx="643.22" cy="818.40" r="3.7" fill="#3f51b5"/><circle cx="726.93" cy="818.40" r="3.7" fill="#3f51b5"/><circle cx="810.64" cy="818.40" r="3.7" fill="#3f51b5"/><circle cx="894.35" cy="818.40" r="3.7" fill="#3f51b5"/><circle cx="978.06" cy="818.40" r="3.7" fill="#3f51b5"/><circle cx="1061.77" cy="818.40" r="3.7" fill="#3f51b5"/><circle cx="1145.48" cy="818.40" r="3.7" fill="#3f51b5"/><circle cx="1229.19" cy="818.40" r="3.7" fill="#3f51b5"/><polyline points="475.80,818.40 559.51,818.40 643.22,818.40 726.93,818.40 810.64,818.40 894.35,818.40 978.06,818.40 1061.77,818.40 1145.48,818.40 1229.19,818.40" fill="none" stroke="#ffc107" stroke-width="2" stroke-linejoin="round"/><circle cx="475.80" cy="818.40" r="3.7" fill="#ffc107"/><circle cx="559.51" cy="818.40" r="3.7" fill="#ffc107"/><circle cx="643.22" cy="818.40" r="3.7" fill="#ffc107"/><circle cx="726.93" cy="818.40" r="3.7" fill="#ffc107"/><circle cx="810.64" cy="818.40" r="3.7" fill="#ffc107"/><circle cx="894.35" cy="818.40" r="3.7" fill="#ffc107"/><circle cx="978.06" cy="818.40" r="3.7" fill="#ffc107"/><circle cx="1061.77" cy="818.40" r="3.7" fill="#ffc107"/><circle cx="1145.48" cy="818.40" r="3.7" fill="#ffc107"/><circle cx="1229.19" cy="818.40" r="3.7" fill="#ffc107"/><polyline points="475.80,514.75 559.51,484.25 643.22,456.80 726.93,432.90 810.64,403.10 894.35,372.50 978.06,344.10 1061.77,344.10 1145.48,344.10 1229.19,335.60" fill="none" stroke="#009688" stroke-width="2" stroke-linejoin="round"/><circle cx="475.80" cy="514.75" r="3.7" fill="#009688"/><circle cx="559.51" cy="484.25" r="3.7" fill="#009688"/><circle cx="643.22" cy="456.80" r="3.7" fill="#009688"/><circle cx="726.93" cy="432.90" r="3.7" fill="#009688"/><circle cx="810.64" cy="403.10" r="3.7" fill="#009688"/><circle cx="894.35" cy="372.50" r="3.7" fill="#009688"/><circle cx="978.06" cy="344.10" r="3.7" fill="#009688"/><circle cx="1061.77" cy="344.10" r="3.7" fill="#009688"/><circle cx="1145.48" cy="344.10" r="3.7" fill="#009688"/><circle cx="1229.19" cy="335.60" r="3.7" fill="#009688"/><polyline points="475.80,818.40 559.51,818.40 643.22,818.40 726.93,818.40 810.64,818.40 894.35,818.40 978.06,818.40 1061.77,818.40 1145.48,818.40 1229.19,818.40" fill="none" stroke="#e91e63" stroke-width="2" stroke-linejoin="round"/><circle cx="475.80" cy="818.40" r="3.7" fill="#e91e63"/><circle cx="559.51" cy="818.40" r="3.7" fill="#e91e63"/><circle cx="643.22" cy="818.40" r="3.7" fill="#e91e63"/><circle cx="726.93" cy="818.40" r="3.7" fill="#e91e63"/><circle cx="810.64" cy="818.40" r="3.7" fill="#e91e63"/><circle cx="894.35" cy="818.40" r="3.7" fill="#e91e63"/><circle cx="978.06" cy="818.40" r="3.7" fill="#e91e63"/><circle cx="1061.77" cy="818.40" r="3.7" fill="#e91e63"/><circle cx="1145.48" cy="818.40" r="3.7" fill="#e91e63"/><circle cx="1229.19" cy="818.40" r="3.7" fill="#e91e63"/><polyline points="475.80,819.20 559.51,819.20 643.22,819.20 726.93,819.20 810.64,819.20 894.35,819.20 978.06,819.20 1061.77,819.20 1145.48,819.20 1229.19,819.20" fill="none" stroke="#607d8b" stroke-width="2" stroke-linejoin="round"/><circle cx="475.80" cy="819.20" r="3.7" fill="#607d8b"/><circle cx="559.51" cy="819.20" r="3.7" fill="#607d8b"/><circle cx="643.22" cy="819.20" r="3.7" fill="#607d8b"/><circle cx="726.93" cy="819.20" r="3.7" fill="#607d8b"/><circle cx="810.64" cy="819.20" r="3.7" fill="#607d8b"/><circle cx="894.35" cy="819.20" r="3.7" fill="#607d8b"/><circle cx="978.06" cy="819.20" r="3.7" fill="#607d8b"/><circle cx="1061.77" cy="819.20" r="3.7" fill="#607d8b"/><circle cx="1145.48" cy="819.20" r="3.7" fill="#607d8b"/><circle cx="1229.19" cy="819.20" r="3.7" fill="#607d8b"/><polyline points="475.80,818.40 559.51,818.40 643.22,818.40 726.93,818.40 810.64,818.40 894.35,818.40 978.06,818.40 1061.77,818.40 1145.48,818.40 1229.19,818.40" fill="none" stroke="#2196f3" stroke-width="2" stroke-linejoin="round"/><circle cx="475.80" cy="818.40" r="3.7" fill="#2196f3"/><circle cx="559.51" cy="818.40" r="3.7" fill="#2196f3"/><circle cx="643.22" cy="818.40" r="3.7" fill="#2196f3"/><circle cx="726.93" cy="818.40" r="3.7" fill="#2196f3"/><circle cx="810.64" cy="818.40" r="3.7" fill="#2196f3"/><circle cx="894.35" cy="818.40" r="3.7" fill="#2196f3"/><circle cx="978.06" cy="818.40" r="3.7" fill="#2196f3"/><circle cx="1061.77" cy="818.40" r="3.7" fill="#2196f3"/><circle cx="1145.48" cy="818.40" r="3.7" fill="#2196f3"/><circle cx="1229.19" cy="818.40" r="3.7" fill="#2196f3"/><polyline points="475.80,818.40 559.51,818.40 643.22,818.40 726.93,818.40 810.64,818.40 894.35,818.40 978.06,818.40 1061.77,818.40 1145.48,818.40 1229.19,818.40" fill="none" stroke="#f44336" stroke-width="2" stroke-linejoin="round"/><circle cx="475.80" cy="818.40" r="3.7" fill="#f44336"/><circle cx="559.51" cy="818.40" r="3.7" fill="#f44336"/><circle cx="643.22" cy="818.40" r="3.7" fill="#f44336"/><circle cx="726.93" cy="818.40" r="3.7" fill="#f44336"/><circle cx="810.64" cy="818.40" r="3.7" fill="#f44336"/><circle cx="894.35" cy="818.40" r="3.7" fill="#f44336"/><circle cx="978.06" cy="818.40" r="3.7" fill="#f44336"/><circle cx="1061.77" cy="818.40" r="3.7" fill="#f44336"/><circle cx="1145.48" cy="818.40" r="3.7" fill="#f44336"/><circle cx="1229.19" cy="818.40" r="3.7" fill="#f44336"/><polyline points="475.80,818.40 559.51,818.40 643.22,818.40 726.93,818.40 810.64,818.40 894.35,818.40 978.06,818.40 1061.77,818.40 1145.48,818.40 1229.19,818.40" fill="none" stroke="#8bc34a" stroke-width="2" stroke-linejoin="round"/><circle cx="475.80" cy="818.40" r="3.7" fill="#8bc34a"/><circle cx="559.51" cy="818.40" r="3.7" fill="#8bc34a"/><circle cx="643.22" cy="818.40" r="3.7" fill="#8bc34a"/><circle cx="726.93" cy="818.40" r="3.7" fill="#8bc34a"/><circle cx="810.64" cy="818.40" r="3.7" fill="#8bc34a"/><circle cx="894.35" cy="818.40" r="3.7" fill="#8bc34a"/><circle cx="978.06" cy="818.40" r="3.7" fill="#8bc34a"/><circle cx="1061.77" cy="818.40" r="3.7" fill="#8bc34a"/><circle cx="1145.48" cy="818.40" r="3.7" fill="#8bc34a"/><circle cx="1229.19" cy="818.40" r="3.7" fill="#8bc34a"/><polyline points="475.80,818.40 559.51,818.40 643.22,818.40 726.93,818.40 810.64,818.40 894.35,818.40 978.06,818.40 1061.77,818.40 1145.48,818.40 1229.19,818.40" fill="none" stroke="#00bcd4" stroke-width="2" stroke-linejoin="round"/><circle cx="475.80" cy="818.40" r="3.7" fill="#00bcd4"/><circle cx="559.51" cy="818.40" r="3.7" fill="#00bcd4"/><circle cx="643.22" cy="818.40" r="3.7" fill="#00bcd4"/><circle cx="726.93" cy="818.40" r="3.7" fill="#00bcd4"/><circle cx="810.64" cy="818.40" r="3.7" fill="#00bcd4"/><circle cx="894.35" cy="818.40" r="3.7" fill="#00bcd4"/><circle cx="978.06" cy="818.40" r="3.7" fill="#00bcd4"/><circle cx="1061.77" cy="818.40" r="3.7" fill="#00bcd4"/><circle cx="1145.48" cy="818.40" r="3.7" fill="#00bcd4"/><circle cx="1229.19" cy="818.40" r="3.7" fill="#00bcd4"/><polyline points="475.80,818.40 559.51,818.40 643.22,818.40 726.93,818.40 810.64,818.40 894.35,818.40 978.06,818.40 1061.77,818.40 1145.48,818.40 1229.19,818.40" fill="none" stroke="#3f51b5" stroke-width="2" stroke-linejoin="round"/><circle cx="475.80" cy="818.40" r="3.7" fill="#3f51b5"/><circle cx="559.51" cy="818.40" r="3.7" fill="#3f51b5"/><circle cx="643.22" cy="818.40" r="3.7" fill="#3f51b5"/><circle cx="726.93" cy="818.40" r="3.7" fill="#3f51b5"/><circle cx="810.64" cy="818.40" r="3.7" fill="#3f51b5"/><circle cx="894.35" cy="818.40" r="3.7" fill="#3f51b5"/><circle cx="978.06" cy="818.40" r="3.7" fill="#3f51b5"/><circle cx="1061.77" cy="818.40" r="3.7" fill="#3f51b5"/><circle cx="1145.48" cy="818.40" r="3.7" fill="#3f51b5"/><circle cx="1229.19" cy="818.40" r="3.7" fill="#3f51b5"/><polyline points="475.80,818.40 559.51,818.40 643.22,818.40 726.93,818.40 810.64,818.40 894.35,818.40 978.06,818.40 1061.77,818.40 1145.48,818.40 1229.19,818.40" fill="none" stroke="#ffc107" stroke-width="2" stroke-linejoin="round"/><circle cx="475.80" cy="818.40" r="3.7" fill="#ffc107"/><circle cx="559.51" cy="818.40" r="3.7" fill="#ffc107"/><circle cx="643.22" cy="818.40" r="3.7" fill="#ffc107"/><circle cx="726.93" cy="818.40" r="3.7" fill="#ffc107"/><circle cx="810.64" cy="818.40" r="3.7" fill="#ffc107"/><circle cx="894.35" cy="818.40" r="3.7" fill="#ffc107"/><circle cx="978.06" cy="818.40" r="3.7" fill="#ffc107"/><circle cx="1061.77" cy="818.40" r="3.7" fill="#ffc107"/><circle cx="1145.48" cy="818.40" r="3.7" fill="#ffc107"/><circle cx="1229.19" cy="818.40" r="3.7" fill="#ffc107"/><polyline points="475.80,617.50 559.51,597.50 643.22,579.25 726.93,563.25 810.64,543.75 894.35,523.75 978.06,506.00 1061.77,506.00 1145.48,506.00 1229.19,501.50" fill="none" stroke="#e91e63" stroke-width="2" stroke-linejoin="round"/><circle cx="475.80" cy="617.50" r="3.7" fill="#e91e63"/><circle cx="559.51" cy="597.50" r="3.7" fill="#e91e63"/><circle cx="643.22" cy="579.25" r="3.7" fill="#e91e63"/><circle cx="726.93" cy="563.25" r="3.7" fill="#e91e63"/><circle cx="810.64" cy="543.75" r="3.7" fill="#e91e63"/><circle cx="894.35" cy="523.75" r="3.7" fill="#e91e63"/><circle cx="978.06" cy="506.00" r="3.7" fill="#e91e63"/><circle cx="1061.77" cy="506.00" r="3.7" fill="#e91e63"/><circle cx="1145.48" cy="506.00" r="3.7" fill="#e91e63"/><circle cx="1229.19" cy="501.50" r="3.7" fill="#e91e63"/><polyline points="475.80,715.50 559.51,705.50 643.22,695.75 726.93,687.75 810.64,677.75 894.35,667.40 978.06,656.50 1061.77,656.50 1145.48,656.50 1229.19,653.75" fill="none" stroke="#607d8b" stroke-width="2" stroke-linejoin="round"/><circle cx="475.80" cy="715.50" r="3.7" fill="#607d8b"/><circle cx="559.51" cy="705.50" r="3.7" fill="#607d8b"/><circle cx="643.22" cy="695.75" r="3.7" fill="#607d8b"/><circle cx="726.93" cy="687.75" r="3.7" fill="#607d8b"/><circle cx="810.64" cy="677.75" r="3.7" fill="#607d8b"/><circle cx="894.35" cy="667.40" r="3.7" fill="#607d8b"/><circle cx="978.06" cy="656.50" r="3.7" fill="#607d8b"/><circle cx="1061.77" cy="656.50" r="3.7" fill="#607d8b"/><circle cx="1145.48" cy="656.50" r="3.7" fill="#607d8b"/><circle cx="1229.19" cy="653.75" r="3.7" fill="#607d8b"/><polyline points="475.80,819.00 559.51,819.00 643.22,819.00 726.93,819.00 810.64,819.00 894.35,819.00 978.06,819.00 1061.77,819.00 1145.48,819.00 1229.19,819.00" fill="none" stroke="#5d6f78" stroke-width="2" stroke-linejoin="round"/><circle cx="475.80" cy="819.00" r="3.7" fill="#5d6f78"/><circle cx="559.51" cy="819.00" r="3.7" fill="#5d6f78"/><circle cx="643.22" cy="819.00" r="3.7" fill="#5d6f78"/><circle cx="726.93" cy="819.00" r="3.7" fill="#5d6f78"/><circle cx="810.64" cy="819.00" r="3.7" fill="#5d6f78"/><circle cx="894.35" cy="819.00" r="3.7" fill="#5d6f78"/><circle cx="978.06" cy="819.00" r="3.7" fill="#5d6f78"/><circle cx="1061.77" cy="819.00" r="3.7" fill="#5d6f78"/><circle cx="1145.48" cy="819.00" r="3.7" fill="#5d6f78"/><circle cx="1229.19" cy="819.00" r="3.7" fill="#5d6f78"/><polyline points="475.80,818.40 559.51,818.40 643.22,818.40 726.93,818.40 810.64,818.40 894.35,818.40 978.06,818.40 1061.77,818.40 1145.48,818.40 1229.19,816.50" fill="none" stroke="#2196f3" stroke-width="2" stroke-linejoin="round"/><circle cx="475.80" cy="818.40" r="3.7" fill="#2196f3"/><circle cx="559.51" cy="818.40" r="3.7" fill="#2196f3"/><circle cx="643.22" cy="818.40" r="3.7" fill="#2196f3"/><circle cx="726.93" cy="818.40" r="3.7" fill="#2196f3"/><circle cx="810.64" cy="818.40" r="3.7" fill="#2196f3"/><circle cx="894.35" cy="818.40" r="3.7" fill="#2196f3"/><circle cx="978.06" cy="818.40" r="3.7" fill="#2196f3"/><circle cx="1061.77" cy="818.40" r="3.7" fill="#2196f3"/><circle cx="1145.48" cy="818.40" r="3.7" fill="#2196f3"/><circle cx="1229.19" cy="816.50" r="3.7" fill="#2196f3"/><polyline points="475.80,818.40 559.51,818.40 643.22,818.40 726.93,818.40 810.64,818.40 894.35,818.40 978.06,818.40 1061.77,818.40 1145.48,818.40 1229.19,818.40" fill="none" stroke="#f44336" stroke-width="2" stroke-linejoin="round"/><circle cx="475.80" cy="818.40" r="3.7" fill="#f44336"/><circle cx="559.51" cy="818.40" r="3.7" fill="#f44336"/><circle cx="643.22" cy="818.40" r="3.7" fill="#f44336"/><circle cx="726.93" cy="818.40" r="3.7" fill="#f44336"/><circle cx="810.64" cy="818.40" r="3.7" fill="#f44336"/><circle cx="894.35" cy="818.40" r="3.7" fill="#f44336"/><circle cx="978.06" cy="818.40" r="3.7" fill="#f44336"/><circle cx="1061.77" cy="818.40" r="3.7" fill="#f44336"/><circle cx="1145.48" cy="818.40" r="3.7" fill="#f44336"/><circle cx="1229.19" cy="818.40" r="3.7" fill="#f44336"/><circle cx="1298.2" cy="323.20" r="2.4" fill="#2196f3"/><text x="1307" y="326.90" font-family="Liberation Sans" font-size="11.7" fill="#474747" xml:space="preserve">A+  Вт·ч Т суммарный</text><circle cx="1298.2" cy="354.50" r="2.4" fill="#f44336"/><text x="1307" y="358.20" font-family="Liberation Sans" font-size="11.7" fill="#474747" xml:space="preserve">A+  Вт·ч Т 1</text><circle cx="1298.2" cy="383.80" r="2.4" fill="#8bc34a"/><text x="1307" y="387.50" font-family="Liberation Sans" font-size="11.7" fill="#474747" xml:space="preserve">A+  Вт·ч Т 2</text><circle cx="1298.2" cy="413.00" r="2.4" fill="#00bcd4"/><text x="1307" y="416.70" font-family="Liberation Sans" font-size="11.7" fill="#474747" xml:space="preserve">A+  Вт·ч Т 3</text><circle cx="1298.2" cy="441.80" r="2.4" fill="#3f51b5"/><text x="1307" y="445.50" font-family="Liberation Sans" font-size="11.7" fill="#474747" xml:space="preserve">A+  Вт·ч Т 4</text><circle cx="1298.2" cy="473.00" r="2.4" fill="#ffc107"/><text x="1307" y="476.70" font-family="Liberation Sans" font-size="11.7" fill="#474747" xml:space="preserve">A-  Вт·ч Т суммарный</text><circle cx="1298.2" cy="504.40" r="2.4" fill="#009688"/><text x="1307" y="508.10" font-family="Liberation Sans" font-size="11.7" fill="#474747" xml:space="preserve">A-  Вт·ч Т 1</text><circle cx="1298.2" cy="533.20" r="2.4" fill="#e91e63"/><text x="1307" y="536.90" font-family="Liberation Sans" font-size="11.7" fill="#474747" xml:space="preserve">A-  Вт·ч Т 2</text><circle cx="1298.2" cy="562.30" r="2.4" fill="#607d8b"/><text x="1307" y="566.00" font-family="Liberation Sans" font-size="11.7" fill="#474747" xml:space="preserve">A-  Вт·ч Т 3</text><circle cx="1298.2" cy="591.50" r="2.4" fill="#2196f3"/><text x="1307" y="595.20" font-family="Liberation Sans" font-size="11.7" fill="#474747" xml:space="preserve">A-  Вт·ч Т 4</text><circle cx="1298.2" cy="622.60" r="2.4" fill="#f44336"/><text x="1307" y="626.30" font-family="Liberation Sans" font-size="11.7" fill="#474747" xml:space="preserve">R+  вар·ч Т суммарный</text><circle cx="1298.2" cy="656.00" r="2.4" fill="#8bc34a"/><text x="1307" y="659.70" font-family="Liberation Sans" font-size="11.7" fill="#474747" xml:space="preserve">R+  вар·ч Т 1</text><circle cx="1298.2" cy="689.50" r="2.4" fill="#00bcd4"/><text x="1307" y="693.20" font-family="Liberation Sans" font-size="11.7" fill="#474747" xml:space="preserve">R+  вар·ч Т 2</text><circle cx="1298.2" cy="722.90" r="2.4" fill="#3f51b5"/><text x="1307" y="726.60" font-family="Liberation Sans" font-size="11.7" fill="#474747" xml:space="preserve">R+  вар·ч Т 3</text><circle cx="1298.2" cy="755.90" r="2.4" fill="#ffc107"/><text x="1307" y="759.60" font-family="Liberation Sans" font-size="11.7" fill="#474747" xml:space="preserve">R+  вар·ч Т 4</text><circle cx="1298.2" cy="789.30" r="2.4" fill="#009688"/><text x="1307" y="793.00" font-family="Liberation Sans" font-size="11.7" fill="#474747" xml:space="preserve">R-  вар·ч Т суммарный</text><circle cx="1298.2" cy="822.70" r="2.4" fill="#e91e63"/><text x="1307" y="826.40" font-family="Liberation Sans" font-size="11.7" fill="#474747" xml:space="preserve">R-  вар·ч Т 1</text><circle cx="1298.2" cy="856.20" r="2.4" fill="#607d8b"/><text x="1307" y="859.90" font-family="Liberation Sans" font-size="11.7" fill="#474747" xml:space="preserve">R-  вар·ч Т 2</text><circle cx="1457.9" cy="323.30" r="2.4" fill="#2196f3"/><text x="1466.4" y="327.00" font-family="Liberation Sans" font-size="11.7" fill="#474747" xml:space="preserve">R-  вар·ч Т 3</text><circle cx="1457.9" cy="356.60" r="2.4" fill="#f44336"/><text x="1466.4" y="360.30" font-family="Liberation Sans" font-size="11.7" fill="#474747" xml:space="preserve">R-  вар·ч Т 4</text></svg></div>
</body></html>
